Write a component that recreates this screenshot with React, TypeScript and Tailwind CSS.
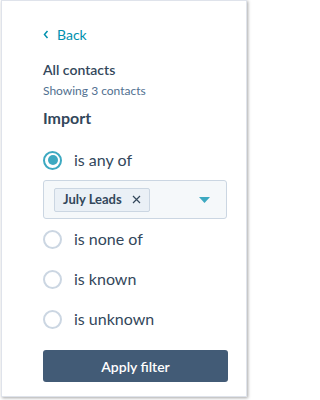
const font = { fontFamily: 'Lato, "Open Sans", sans-serif' };

function Radio({ label, checked }: { label: string; checked?: boolean }) {
  return (
    <label className="flex items-center h-[40px] cursor-pointer">
      {checked ? (
        <span className="w-[19px] h-[19px] rounded-full border-[2px] border-[#3da9c1] flex items-center justify-center">
          <span className="w-[10px] h-[10px] rounded-full bg-[#3da9c1]" />
        </span>
      ) : (
        <span className="w-[19px] h-[19px] rounded-full border-[2px] border-[#cbd6e2] bg-white" />
      )}
      <span className="ml-[12px] text-[16px] text-[#33475b]">{label}</span>
    </label>
  );
}

export default function App() {
  return (
    <div className="w-[249px] h-[400px] bg-white" style={font}>
      <div className="ml-[1px] w-[246px] h-[397px] bg-white border border-[#dfe3eb] shadow-[1px_1px_3px_rgba(0,0,0,0.35)] pl-[41px] pr-[19px] pt-[24px]">
        <a className="flex items-center text-[14px] text-[#0091ae] h-[18px]">
          <svg width="6" height="9" viewBox="0 0 6 9" className="mr-[8px]">
            <path d="M4.5 1 L1.5 4.5 L4.5 8" fill="none" stroke="#0091ae" strokeWidth="1.5" />
          </svg>
          Back
        </a>
        <div className="mt-[18px] text-[14px] font-semibold text-[#33475b] leading-[18px]">All contacts</div>
        <div className="mt-[4px] text-[12px] text-[#516f90] leading-[16px]">Showing 3 contacts</div>
        <div className="mt-[9px] text-[16px] font-bold text-[#33475b] leading-[20px]">Import</div>
        <div className="mt-[12px]">
          <Radio label="is any of" checked />
          <div className="h-[39px] rounded-[3px] border border-[#cbd6e2] bg-[#f5f8fa] flex items-center pl-[10px] pr-[16px]">
            <span className="h-[24px] px-[8px] flex items-center border border-[#cbd6e2] bg-[#eaf0f6] rounded-[2px] text-[13px] font-bold text-[#33475b]">
              July Leads
              <svg width="9" height="9" viewBox="0 0 9 9" className="ml-[10px]">
                <path d="M1 1 L8 8 M8 1 L1 8" stroke="#33475b" strokeWidth="1.2" />
              </svg>
            </span>
            <svg width="11" height="6" viewBox="0 0 11 6" className="ml-auto">
              <path d="M0 0 H11 L5.5 6 Z" fill="#3da9c1" />
            </svg>
          </div>
          <Radio label="is none of" />
          <Radio label="is known" />
          <Radio label="is unknown" />
        </div>
        <button className="mt-[11px] w-[185px] h-[32px] rounded-[3px] bg-[#425b76] text-white text-[14px] font-semibold">
          Apply filter
        </button>
      </div>
    </div>
  );
}
